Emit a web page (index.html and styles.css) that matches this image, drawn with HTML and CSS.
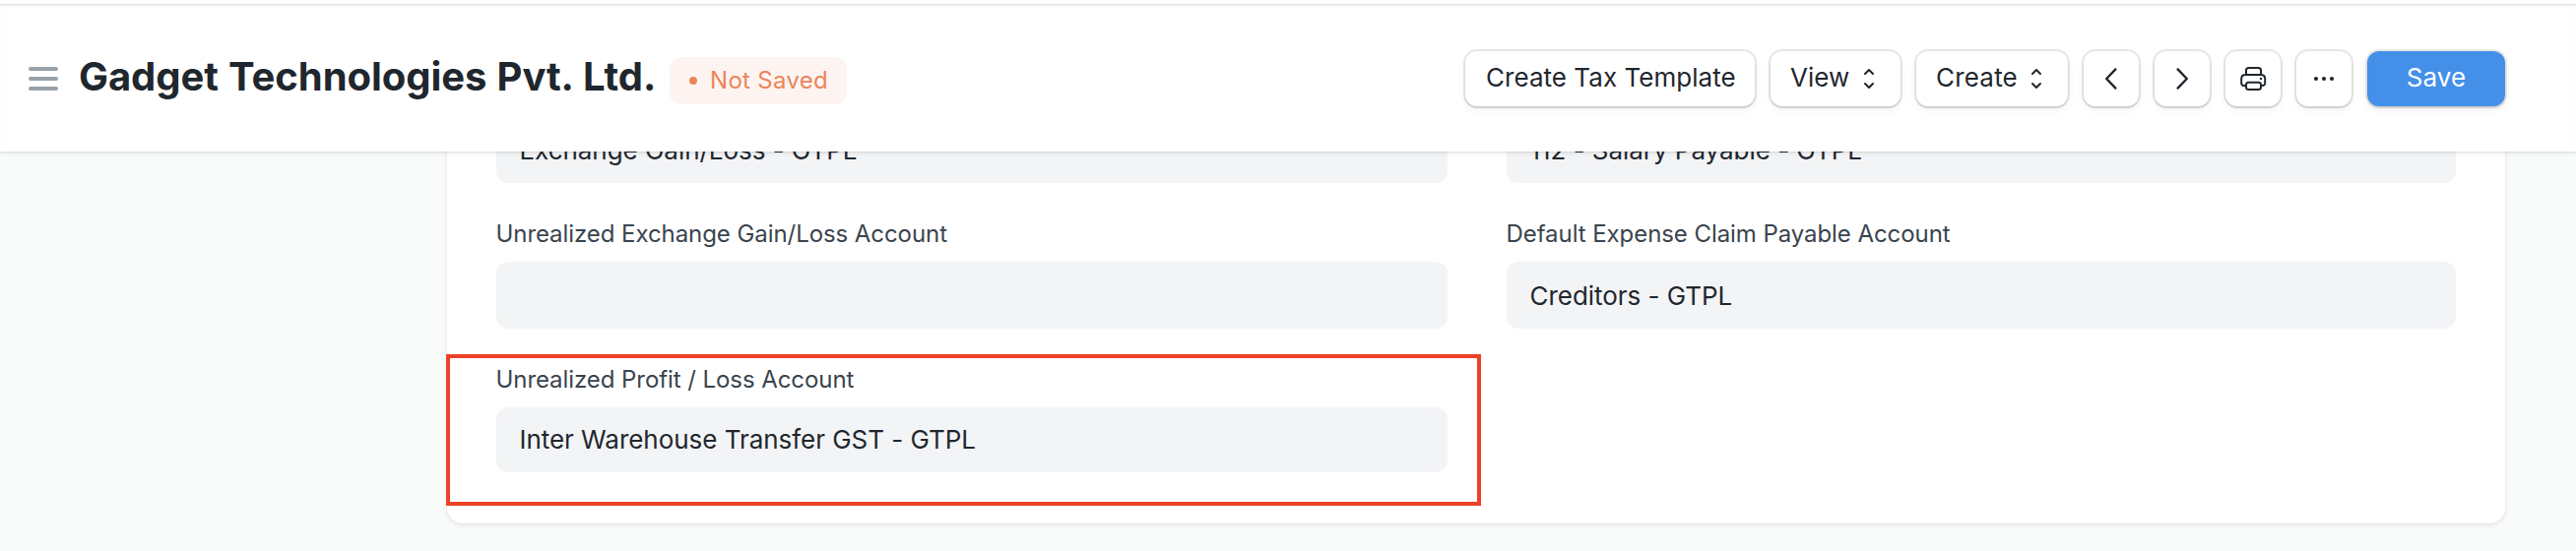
FILE: index.html
```html
<!DOCTYPE html>
<html lang="en">
<head>
<meta charset="utf-8">
<title>Gadget Technologies Pvt. Ltd.</title>
<link rel="stylesheet" href="styles.css">
</head>
<body>
<div class="navbar-edge"></div>
<header class="page-head">
  <svg class="menu-icon" width="34" height="26" viewBox="0 0 34 26"><path d="M4 3H30M4 13H30M4 23H30"/></svg>
  <h1 class="title">Gadget Technologies Pvt. Ltd.</h1>
  <span class="indicator"><i class="dot"></i><span>Not Saved</span></span>
  <div class="actions">
    <button class="btn btn-template">Create Tax Template</button>
    <button class="btn btn-view">View<svg class="icon" width="12" height="22" viewBox="0 0 12 22"><path d="M2 6L6 2L10 6M2 16L6 20L10 16"/></svg></button>
    <button class="btn btn-create">Create<svg class="icon" width="12" height="22" viewBox="0 0 12 22"><path d="M2 6L6 2L10 6M2 16L6 20L10 16"/></svg></button>
    <button class="btn btn-icon" aria-label="Previous"><svg class="icon arrow" width="32" height="32" viewBox="0 0 32 32"><path d="M20.4 6.4L11.2 16L20.4 25.6"/></svg></button>
    <button class="btn btn-icon" aria-label="Next"><svg class="icon arrow" width="32" height="32" viewBox="0 0 32 32"><path d="M11.6 6.4L20.8 16L11.6 25.6"/></svg></button>
    <button class="btn btn-icon" aria-label="Print"><svg class="icon" width="32" height="32" viewBox="0 0 32 32"><path d="M9 11.500V7.500A2.500 2.500 0 0 1 11.500 5H21.500A2.500 2.500 0 0 1 24 7.500V11.500M8.500 23H7A2.500 2.500 0 0 1 4.200 20.500V15.500A4 4 0 0 1 8.200 12H24.800A4 4 0 0 1 28.200 15.500V20.500A2.500 2.500 0 0 1 25.500 23H24M11 19.800H21.500A2.500 2.500 0 0 1 24 22.200V24.500A2.500 2.500 0 0 1 21.500 27H11.500A2.500 2.500 0 0 1 9 24.500V22.200A2.500 2.500 0 0 1 11 19.800Z"/><circle class="fill" cx="24" cy="16" r="1.200"/></svg></button>
    <button class="btn btn-icon" aria-label="More"><svg class="icon" width="32" height="32" viewBox="0 0 32 32"><g class="fill"><circle cx="8" cy="16" r="2.100"/><circle cx="16" cy="16" r="2.100"/><circle cx="24" cy="16" r="2.100"/></g></svg></button>
    <button class="btn btn-save">Save</button>
  </div>
</header>
<main class="page-body">
  <section class="card">
    <div class="column">
      <div class="field"><div class="value">Exchange Gain/Loss - GTPL</div></div>
      <div class="field"><label class="label">Unrealized Exchange Gain/Loss Account</label><div class="value"></div></div>
      <div class="field"><label class="label">Unrealized Profit / Loss Account</label><div class="value value-short">Inter Warehouse Transfer GST - GTPL</div></div>
    </div>
    <div class="column">
      <div class="field"><div class="value">112 - Salary Payable - GTPL</div></div>
      <div class="field"><label class="label">Default Expense Claim Payable Account</label><div class="value">Creditors - GTPL</div></div>
    </div>
    <div class="highlight"></div>
  </section>
</main>
</body>
</html>
```
FILE: styles.css
```css
* { box-sizing: border-box; }
body {
  margin: 0;
  height: 560px;
  overflow: hidden;
  background: #f9fbfa;
  color: #1f272e;
  font-family: Inter, "Liberation Sans", sans-serif;
}
.navbar-edge { height: 4px; background: #fff; }
.page-head {
  position: relative;
  z-index: 2;
  display: flex;
  align-items: center;
  height: 150px;
  padding: 0 72px 0 27px;
  background: #fff;
  box-shadow: 0 1px 2px rgba(0,0,0,.1), 0 2px 6px rgba(0,0,0,.05), inset 0 2px 2px -1px rgba(0,0,0,.12), inset 0 4px 6px -3px rgba(0,0,0,.06);
}
.menu-icon { margin-top: 2px; fill: none; stroke: #98a1a9; stroke-width: 4; stroke-linecap: round; }
.title {
  margin: 0 0 2px 19px;
  width: 600px;
  font-size: 40px;
  line-height: 56px;
  font-weight: 700;
  letter-spacing: -.06px;
  word-spacing: .8px;
  white-space: nowrap;
}
.indicator {
  display: flex;
  align-items: center;
  width: 180px;
  height: 48px;
  margin-top: 6px;
  padding: 0 0 2px 20px;
  border-radius: 12px;
  background: #fdf4f1;
  color: #eb8559;
  font-size: 24px;
  letter-spacing: .3px;
  white-space: nowrap;
}
.dot { width: 8px; height: 8px; margin: 2px 13px 0 0; border-radius: 50%; background: #eb8559; }
.actions { display: flex; gap: 16px; margin: 2px 0 0 auto; }
.btn {
  display: flex;
  align-items: center;
  height: 56px;
  padding: 0 0 2px 20px;
  border: 0;
  border-radius: 12px;
  background: #fff;
  color: #1f272e;
  font: 400 26px/54px Inter, "Liberation Sans", sans-serif;
  letter-spacing: .04px;
  white-space: nowrap;
  box-shadow: 0 0 0 2px rgba(0,0,0,.09), 0 2px 2px rgba(0,0,0,.08), 0 4px 10px rgba(0,0,0,.05);
}
.btn-template { width: 294px; padding-left: 21px; }
.btn-view { width: 132px; }
.btn-create { width: 154px; letter-spacing: .2px; }
.btn-view .icon, .btn-create .icon { margin: 2px 26px 0 auto; }
.btn-icon { width: 56px; padding: 0; justify-content: center; }
.btn-save { width: 140px; padding: 0 0 2px; justify-content: center; background: #4490e8; color: #fff; }
.icon { display: block; fill: none; stroke: #1f272e; stroke-width: 2; stroke-linecap: round; stroke-linejoin: round; }
.arrow { stroke-width: 2.4; }
.fill { fill: #1f272e; stroke: none; }
.page-body { display: flex; padding-left: 454px; }
.card {
  position: relative;
  display: grid;
  grid-template-columns: 966px 964px;
  column-gap: 60px;
  width: 2090px;
  height: 414px;
  margin-top: -36px;
  padding: 0 50px;
  border-radius: 16px;
  background: #fff;
  box-shadow: 0 0 2px rgba(0,0,0,.08), 0 2px 6px rgba(0,0,0,.08);
}
.column { display: flex; flex-direction: column; gap: 33px; }
.label {
  display: block;
  margin: 0 0 11px -.5px;
  padding-top: 1px;
  font-size: 24px;
  line-height: 35px;
  letter-spacing: -.07px;
  color: #3a444d;
}
.value {
  height: 68px;
  padding-left: 23.5px;
  border-radius: 12px;
  background: #f3f4f6;
  font-size: 26px;
  line-height: 69px;
  letter-spacing: -.04px;
}
.value-short { height: 66px; line-height: 66px; }
.highlight {
  position: absolute;
  left: -1px;
  top: 242px;
  width: 1051px;
  height: 154px;
  border: 4px solid #ec4127;
}
```
